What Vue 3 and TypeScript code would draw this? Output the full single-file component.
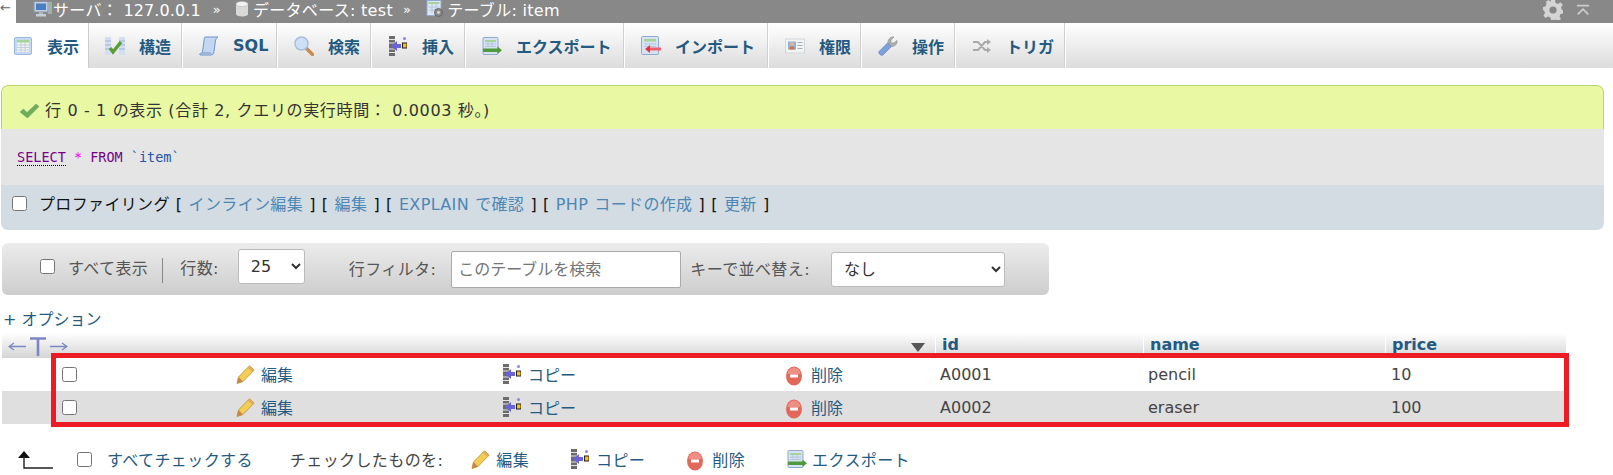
<script setup lang="ts">
const tabs = [
  { icon: 'i-browse', label: '表示', active: true, w: 89 },
  { icon: 'i-struct', label: '構造', w: 94 },
  { icon: 'i-sql', label: 'SQL', w: 95 },
  { icon: 'i-search', label: '検索', w: 94 },
  { icon: 'i-insert', label: '挿入', w: 94 },
  { icon: 'i-export', label: 'エクスポート', w: 159 },
  { icon: 'i-import', label: 'インポート', w: 144 },
  { icon: 'i-priv', label: '権限', w: 93 },
  { icon: 'i-wrench', label: '操作', w: 94 },
  { icon: 'i-trigger', label: 'トリガ', w: 110 },
]

const rows = [
  { id: 'A0001', name: 'pencil', price: 10 },
  { id: 'A0002', name: 'eraser', price: 100 },
]
</script>

<template>
  <svg width="0" height="0" class="defs">
    <defs>
      <symbol id="i-server" viewBox="0 0 20 16">
        <rect x="1" y="0.500" width="14" height="10.500" fill="#c3cedd" stroke="#8795a8" />
        <rect x="3" y="2.500" width="10" height="6.500" fill="#4a7ec4" />
        <rect x="6" y="11" width="4" height="2" fill="#a9b4c2" />
        <rect x="3" y="13" width="10" height="2.500" fill="#c7ced8" />
        <rect x="15" y="1" width="4" height="12" fill="#a4acb4" />
        <circle cx="17" cy="4" r="1" fill="#6fd06f" />
      </symbol>
      <symbol id="i-db" viewBox="0 0 14 16">
        <path d="M1 3v10c0 1.500 2.500 2.500 6 2.500s6-1 6-2.500V3z" fill="#d8d8d8" />
        <ellipse cx="7" cy="3" rx="6" ry="2.500" fill="#f2f2f2" stroke="#b5b5b5" stroke-width=".6" />
      </symbol>
      <symbol id="i-tablegear" viewBox="0 0 18 18">
        <rect x="1" y="0.500" width="14" height="15" fill="#dce7f5" stroke="#8fa9cf" />
        <rect x="2.500" y="2" width="11" height="2" fill="#a6d29a" />
        <path d="M2.500 7h11M2.500 10h11M6 4v9M10 4v9" stroke="#b5c5dc" />
        <circle cx="12.500" cy="12.500" r="4" fill="#8a8a8a" stroke="#666" />
        <circle cx="12.500" cy="12.500" r="1.400" fill="#ddd" />
      </symbol>
      <symbol id="i-browse" viewBox="0 0 20 20">
        <rect x="1.500" y="1.500" width="17" height="17" rx="1.500" fill="#c5d8f2" stroke="#9db8de" />
        <rect x="4" y="4" width="12" height="12" fill="#eef3e9" />
        <rect x="4" y="4" width="12" height="2.500" fill="#a5d398" />
        <path d="M4 9h12M4 11.500h12M4 14h12M8 6.500V16M12 6.500V16" stroke="#b8c9df" stroke-width=".8" />
      </symbol>
      <symbol id="i-struct" viewBox="0 0 20 20">
        <rect x="0" y="1" width="6" height="18" fill="#d2dff0" />
        <rect x="14" y="1" width="6" height="18" fill="#d2dff0" />
        <path d="M0 5h6M0 9h6M0 13h6M14 5h6M14 9h6M14 13h6" stroke="#8fa9cf" stroke-width=".8" />
        <path d="M5 12l3 4 8-10" fill="none" stroke="#5e9c3a" stroke-width="3.500" />
      </symbol>
      <symbol id="i-sql" viewBox="0 0 20 20">
        <path d="M6 1h13c-1.500 1-2.300 2-2.600 4L15 15.500c-.3 2-1.200 3.500-3 3.500H2c-1 0-1.500-.5-1.500-1 2-.5 3-1.500 3.300-4L5 5C5.300 3 5 2 6 1z" fill="#c3d7f2" stroke="#6f93c9" />
        <path d="M3 17h9" stroke="#6f93c9" />
      </symbol>
      <symbol id="i-search" viewBox="0 0 20 20">
        <path d="M12 12l6.500 6.500" stroke="#c98a4b" stroke-width="3.400" stroke-linecap="round" />
        <circle cx="7.500" cy="7.500" r="6.500" fill="#cfe0f5" stroke="#a8bfdc" stroke-width="1.500" />
      </symbol>
      <symbol id="i-insert" viewBox="0 0 18 20">
        <rect x="0" y="0" width="6" height="20" fill="#6c6c6c" />
        <path d="M0 3.500h6M0 7h6M0 13h6M0 16.500h6" stroke="#e4e4e4" />
        <path d="M2 10l6-5v10z" fill="#6a62d8" />
        <rect x="7" y="8" width="5" height="4" fill="#6a62d8" />
        <rect x="13" y="6.500" width="5" height="6" fill="#222" />
        <rect x="14" y="7.500" width="3.500" height="4" fill="#f0c020" />
        <circle cx="15.500" cy="2.500" r="1.500" fill="#8c84e6" />
      </symbol>
      <symbol id="i-export" viewBox="0 0 20 18">
        <rect x="1" y=".5" width="15" height="17" rx="1" fill="#d7e3f3" stroke="#8fa9cf" />
        <rect x="3" y="3" width="11" height="2" fill="#a5d398" />
        <path d="M3 7h11M3 9.500h11M6 5v5M10 5v5" stroke="#b5c5dc" />
        <rect x="1" y="11.500" width="15" height="3.500" fill="#4f9a3c" />
        <path d="M15.500 9.500l4.500 3.700-4.500 3.700z" fill="#4f9a3c" />
      </symbol>
      <symbol id="i-import" viewBox="0 0 20 20">
        <rect x=".5" y=".5" width="17" height="18" rx="1" fill="#d7e3f3" stroke="#8fa9cf" />
        <rect x="3" y="3" width="12" height="2.500" fill="#a5d398" />
        <path d="M3 8h12M3 10.500h12" stroke="#b5c5dc" />
        <rect x="8" y="11.500" width="12" height="3" fill="#f2606a" />
        <path d="M9 9l-5 4 5 4z" fill="#e8323e" />
      </symbol>
      <symbol id="i-priv" viewBox="0 0 20 20">
        <rect x=".5" y="3" width="19" height="14" fill="#f1f3f5" stroke="#d4d8dc" />
        <rect x="3" y="5.500" width="8" height="8" fill="#8fb2dc" />
        <circle cx="7" cy="8" r="2" fill="#e8b48a" />
        <path d="M4.500 13.500c0-2.500 1-3 2.500-3s2.500.5 2.500 3z" fill="#d8703a" />
        <path d="M12.500 6.500h5M12.500 9.500h5M12.500 12.500h5" stroke="#a6aeb8" />
      </symbol>
      <symbol id="i-wrench" viewBox="0 0 20 20">
        <path d="M1 15.500L10 6.500 13.500 10.500 5 19c-1.500 1.200-5-1-4-3.500z" fill="#7ba1dc" stroke="#5a7fb8" stroke-width=".6" />
        <path d="M10 6.500C10 3 12.500.500 16 1l-3 3v3h3l3-2.500C19.500 8 17 10.500 13.500 10.500z" fill="#b0b0b0" stroke="#888" stroke-width=".6" />
      </symbol>
      <symbol id="i-trigger" viewBox="0 0 20 20">
        <path d="M1 6h5l7 8h3M1 14h5l7-8h3" fill="none" stroke="#aaa" stroke-width="2" />
        <path d="M15 3l4 3-4 3zM15 11l4 3-4 3z" fill="#aaa" />
      </symbol>
      <symbol id="i-pencil" viewBox="0 0 19 19">
        <path d="M13.500.8l4.700 4.200L7 16.500 1 18.500 2.500 12z" fill="#f2cf54" stroke="#b98b2e" stroke-width=".8" />
        <path d="M2.500 12L7 16.500 1 18.500z" fill="#c8864a" />
        <path d="M13.500.8l4.700 4.200-1.700 2-4.700-4.200z" fill="#e2ac5a" />
      </symbol>
      <symbol id="i-del" viewBox="0 0 16 20">
        <ellipse cx="8" cy="10" rx="8" ry="9.500" fill="#e2685c" />
        <path d="M1.500 8a6.500 6.500 0 0 1 13 0z" fill="#ee8f84" />
        <rect x="4" y="8.500" width="8" height="3" fill="#fff" />
      </symbol>
      <symbol id="i-check" viewBox="0 0 20 14">
        <path d="M0 8l3.500-3 3.500 3.500L16 0l3 2.500L7.500 14z" fill="#6dae58" stroke="#7f9d76" stroke-width=".5" />
      </symbol>
      <symbol id="i-gear" viewBox="0 0 20 20">
        <path d="M8 0h4l.5 3 2.500 1 2.500-1.800 2.300 2.800-1.800 2.500 1 2.500 1 .5v3l-2.500.5-1 2.500 1.500 2.500-2.800 2-2.500-1.500-1.500.6L11 20H8l-.5-2.500L5 16.500 2.500 18 .5 15.500 2 13 1 10.500 0 10V7l2.500-.5 1-2.500L3 1.800 5.500 0l2 1.800z" fill="#d4d4d4" />
        <circle cx="10" cy="10" r="3.600" fill="#858585" />
      </symbol>
    </defs>
  </svg>

  <div class="page">
    <div class="topbar">
      <div class="back">←</div>
      <svg class="srv"><use href="#i-server" /></svg>
      <span>サーバ： <span class="ip">127.0.0.1</span></span>
      <span class="sep">»</span>
      <svg class="dbicon"><use href="#i-db" /></svg>
      <span>データベース: test</span>
      <span class="sep sep2">»</span>
      <svg class="tblicon"><use href="#i-tablegear" /></svg>
      <span>テーブル: item</span>
      <div class="topright">
        <svg class="gear"><use href="#i-gear" /></svg>
        <svg class="collapse" viewBox="0 0 16 12">
          <path d="M1 1h14" stroke="#ccc" stroke-width="2" />
          <path d="M2 11l6-6 6 6" fill="none" stroke="#ccc" stroke-width="2" />
        </svg>
      </div>
    </div>

    <nav class="tabs">
      <a v-for="t in tabs" :key="t.label" class="tab" :class="{ active: t.active }" :style="{ width: t.w + 'px' }">
        <svg class="tabicon"><use :href="'#' + t.icon" /></svg>
        <span>{{ t.label }}</span>
      </a>
    </nav>

    <section class="result">
      <div class="notice">
        <svg class="check"><use href="#i-check" /></svg>
        <span>行 0 - 1 の表示 (合計 2, クエリの実行時間： 0.0003 秒。)</span>
      </div>
      <div class="sqlbox">
        <span class="kw dotted">SELECT</span> <span class="star">*</span> <span class="kw">FROM</span> <span class="ident">`item`</span>
      </div>
      <div class="links">
        <input type="checkbox" class="cb" />
        <span class="profiling">プロファイリング</span>
        <span>[ <a>インライン編集</a> ]</span>
        <span>[ <a>編集</a> ]</span>
        <span>[ <a>EXPLAIN で確認</a> ]</span>
        <span>[ <a>PHP コードの作成</a> ]</span>
        <span>[ <a>更新</a> ]</span>
      </div>
    </section>

    <div class="toolbar">
      <input type="checkbox" class="cb showall" />
      <span class="allabel">すべて表示</span>
      <span class="divider"></span>
      <span class="lab rowlabel">行数:</span>
      <select class="sel rowsel"><option>25</option></select>
      <span class="lab filterlabel">行フィルタ:</span>
      <input class="filter" placeholder="このテーブルを検索" />
      <span class="lab sortlabel">キーで並べ替え:</span>
      <select class="sel sortsel"><option>なし</option></select>
    </div>

    <div class="options"><a>+ オプション</a></div>

    <div class="tablewrap">
      <div class="row head">
        <div class="arrows">
          <svg viewBox="0 0 60 20" width="60" height="20">
            <path d="M1 9.500h17M6 6l-5 3.500L6 13" fill="none" stroke="#7b86c4" stroke-width="1.300" />
            <path d="M22 1.500h16M30 1.500V19" fill="none" stroke="#7b86c4" stroke-width="2.600" />
            <path d="M42 9.500h17M54 6l5 3.500L54 13" fill="none" stroke="#7b86c4" stroke-width="1.300" />
          </svg>
        </div>
        <div class="sortcell"><svg viewBox="0 0 14 9" width="14" height="9"><path d="M0 0h14L7 9z" fill="#555" /></svg></div>
        <div class="hcell">id</div>
        <div class="hcell">name</div>
        <div class="hcell">price</div>
      </div>
      <div v-for="(r, i) in rows" :key="r.id" class="row body" :class="{ even: i === 1 }">
        <div></div>
        <div class="cell"><input type="checkbox" class="cb" /></div>
        <div class="cell"><svg class="pencil"><use href="#i-pencil" /></svg><a>編集</a></div>
        <div class="cell"><svg class="insert"><use href="#i-insert" /></svg><a>コピー</a></div>
        <div class="cell"><svg class="del"><use href="#i-del" /></svg><a>削除</a></div>
        <div class="cell">{{ r.id }}</div>
        <div class="cell">{{ r.name }}</div>
        <div class="cell">{{ r.price }}</div>
      </div>
      <div class="redbox"></div>
    </div>

    <div class="bulk">
      <svg class="up" viewBox="0 0 35 18" width="35" height="18">
        <path d="M6 0L0 7h12z" fill="#111" />
        <path d="M6 5v12h29" fill="none" stroke="#222" stroke-width="1.400" />
      </svg>
      <input type="checkbox" class="cb" />
      <a class="allcheck">すべてチェックする</a>
      <span class="withsel">チェックしたものを:</span>
      <span class="bulkitem first"><svg class="pencil"><use href="#i-pencil" /></svg><a>編集</a></span>
      <span class="bulkitem"><svg class="insert"><use href="#i-insert" /></svg><a>コピー</a></span>
      <span class="bulkitem"><svg class="del"><use href="#i-del" /></svg><a>削除</a></span>
      <span class="bulkitem"><svg class="exp"><use href="#i-export" /></svg><a>エクスポート</a></span>
    </div>
  </div>
</template>

<style>
html, body { background: #fff; overflow: hidden; }
</style>

<style scoped>
.defs { position: absolute; }
.page { width: 1613px; height: 475px; overflow: hidden; font-family: "DejaVu Sans", "Noto Sans CJK JP", sans-serif; font-size: 16px; color: #444; }
a { color: #235a81; }

.topbar { height: 23px; box-sizing: border-box; padding-bottom: 5px; background: #888; color: #fff; display: flex; align-items: center; white-space: nowrap; letter-spacing: .3px; }
.back { width: 16px; height: 23px; margin-bottom: -5px; background: #fff; color: #666; font-size: 13px; line-height: 16px; margin-right: 17px; }
.srv { width: 20px; height: 16px; }
.ip { letter-spacing: .1px; }
.sep { margin: 0 14px 0 12px; font-size: 13px; }
.sep2 { margin: 0 15px 0 10px; }
.dbicon { width: 14px; height: 16px; margin-right: 4px; }
.tblicon { width: 18px; height: 18px; margin-right: 3px; }
.topright { margin-left: auto; display: flex; align-items: center; gap: 13px; padding: 0 23px 0 0; margin-top: 1px; }
.gear { width: 20px; height: 20px; }
.collapse { width: 14px; height: 12px; }

.tabs { height: 45px; display: flex; background: linear-gradient(#fff, #dcdcdc); }
.tab { display: flex; align-items: center; flex: none; box-sizing: border-box; padding-left: 16px; gap: 14px; font-weight: 700; color: #235a81; border-right: 1px solid #fff; box-shadow: inset -2px 0 0 -1px #d0d0d0; white-space: nowrap; }
.tab.active { background: #fff; padding-left: 13px; border-right: 1px solid #ccc; box-shadow: none; }
.tabicon { width: 20px; height: 20px; }

.result { margin: 17px 9px 0 1px; border-radius: 7px; overflow: hidden; }
.notice { height: 44px; box-sizing: border-box; background: #e8f8a3; border: 1px solid #b3d36b; border-bottom: 0; border-radius: 7px 7px 0 0; padding: 3px 0 0 18px; display: flex; align-items: center; gap: 5px; color: #333; white-space: nowrap; letter-spacing: .65px; }
.check { width: 20px; height: 14px; margin-top: 4px; }
.sqlbox { height: 56px; box-sizing: border-box; background: #e5e5e5; padding: 18px 0 0 16px; font-family: "DejaVu Sans Mono", monospace; font-size: 13.500px; line-height: 20px; }
.kw { color: #770088; }
.dotted { border-bottom: 1px dotted #000; }
.star { color: #ee00ee; }
.ident { color: #2255aa; }
.links { height: 45px; box-sizing: border-box; background: #d3dce3; display: flex; align-items: center; gap: 6px; padding: 0 0 9px 11px; color: #111; white-space: nowrap; letter-spacing: .35px; word-spacing: .75px; }
.links a { color: #4d87b5; }
.profiling { margin: 0 0 0 6px; }
.cb { appearance: auto; flex: none; width: 15px; height: 15px; margin: 0; }

.toolbar { margin: 13px 0 0 2px; width: 1047px; height: 52px; box-sizing: border-box; border-radius: 6px; background: linear-gradient(#ececec, #cdcdcd); display: flex; align-items: center; color: #555; white-space: nowrap; letter-spacing: .4px; }
.showall { margin-left: 38px; margin-top: -5px; }
.allabel { margin-left: 13px; margin-top: -5px; }
.divider { width: 1px; height: 25px; background: #888; margin: 3px 17px 0 14px; }
.lab { margin-top: -3px; }
.rowlabel { margin-top: -5px; }
.sel { font-family: inherit; font-size: 16px; background: #fff; border: 1px solid #bbb; border-radius: 3px; height: 35px; color: #333; box-sizing: border-box; padding-left: 8px; }
.rowsel { width: 67px; margin: -5px 44px 0 19px; }
.filterlabel { margin-right: 15px; }
.filter { width: 230px; height: 37px; box-sizing: border-box; font-family: inherit; font-size: 16px; border: 1px solid #aaa; border-radius: 2px; padding: 0 6px; margin-right: 9px; }
.filter::placeholder { color: #757575; }
.sortsel { width: 174px; margin-left: 21px; }

.options { margin: 14px 0 0 3px; height: 22px; line-height: 22px; }

.tablewrap { position: relative; margin: 2px 0 0 2px; width: 1564px; }
.row { display: grid; grid-template-columns: 60px 174px 267px 283px 154px 208px 243px 175px; }
.head { height: 25px; background: linear-gradient(#fff, #d4d4d4); grid-template-columns: 733px 200px 208px 242px 181px; }
.arrows { padding: 4px 0 0 6px; }
.sortcell { display: flex; justify-content: flex-end; padding: 10px 10px 0 0; }
.hcell { font-weight: 700; color: #235a81; line-height: 23px; padding-left: 6px; border-left: 1px solid #fff; }
.body { height: 33px; background: #fff; }
.body.even { background: #dfdfdf; }
.cell { display: flex; align-items: center; color: #444; white-space: nowrap; padding-bottom: 1px; }
.pencil { flex: none; width: 19px; height: 19px; margin-right: 6px; }
.insert { flex: none; width: 18px; height: 20px; margin-right: 7px; }
.del { flex: none; width: 16px; height: 20px; margin-top: 3px; margin-right: 9px; }
.exp { flex: none; width: 20px; height: 18px; margin-right: 5px; }
.redbox { position: absolute; left: 49px; top: 20px; width: 1518px; height: 74px; box-sizing: border-box; border: 5px solid #ed1c24; pointer-events: none; }

.bulk { display: flex; align-items: center; margin: 22px 0 0 18px; height: 26px; white-space: nowrap; letter-spacing: .4px; }
.up { margin: 2px 24px 0 0; }
.allcheck { margin-left: 15px; }
.withsel { margin-left: 37px; color: #444; }
.bulkitem { display: flex; align-items: center; margin-left: 42px; }
.bulkitem.first { margin-left: 28px; }
</style>
